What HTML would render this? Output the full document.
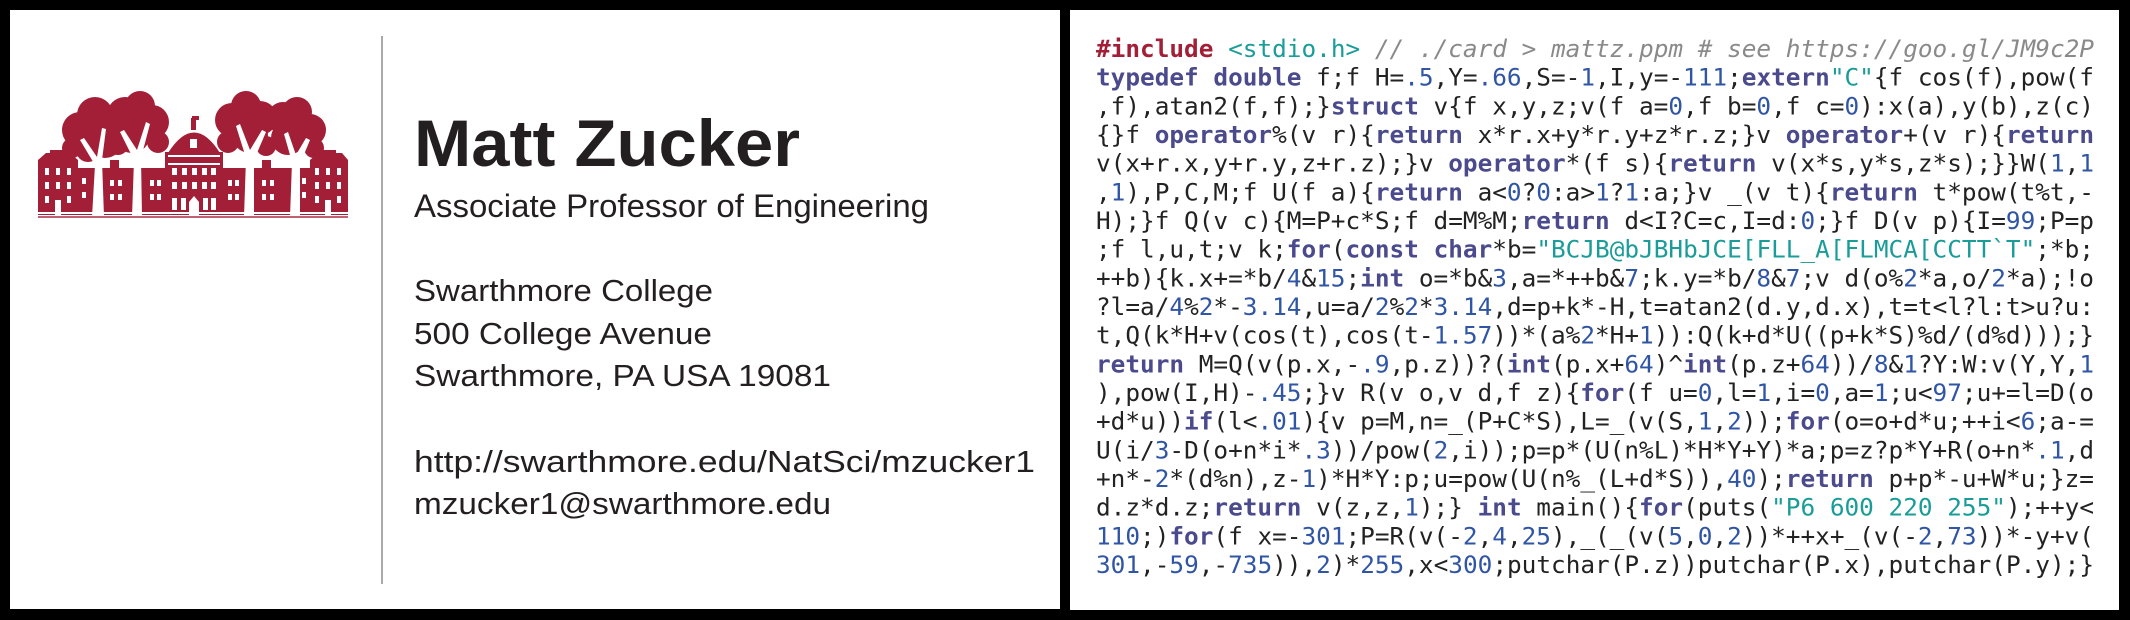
<!DOCTYPE html>
<html><head><meta charset="utf-8"><style>
html,body{margin:0;padding:0;background:#000;}
svg{display:block}
.t{font-family:"Liberation Sans",sans-serif;fill:#231f20}
.code{font-family:"DejaVu Sans Mono","Liberation Mono",monospace;font-size:24.4px;fill:#222;white-space:pre}
.k{fill:#4a4a8c;font-weight:bold}
.n{fill:#2f55a4}
.s{fill:#1a9c99}
.p{fill:#a31f37;font-weight:bold}
.c{fill:#8a8a8a;font-style:italic}
</style></head><body>
<svg width="2130" height="620" viewBox="0 0 2130 620" xmlns="http://www.w3.org/2000/svg">
<rect width="2130" height="620" fill="#000"/>
<rect x="10" y="10" width="1050" height="599" fill="#fff"/>
<rect x="1070" y="10" width="1049" height="600" fill="#fff"/>
<rect x="381" y="36" width="2" height="548" fill="#aaa"/>

<!-- logo -->
<g fill="#a31f37">
  <!-- tree canopies -->
  <circle cx="80" cy="130" r="18"/><circle cx="95" cy="115" r="18"/><circle cx="72" cy="148" r="10"/><circle cx="105" cy="140" r="18"/><circle cx="88" cy="150" r="12"/>
  <circle cx="125" cy="115" r="18"/><circle cx="140" cy="106" r="15"/><circle cx="152" cy="122" r="17"/><circle cx="132" cy="135" r="18"/><circle cx="158" cy="142" r="11"/><circle cx="118" cy="145" r="10"/>
  <circle cx="232" cy="120" r="17"/><circle cx="246" cy="106" r="15"/><circle cx="260" cy="118" r="17"/><circle cx="250" cy="135" r="18"/><circle cx="228" cy="142" r="11"/><circle cx="266" cy="146" r="10"/>
  <circle cx="283" cy="118" r="16"/><circle cx="297" cy="112" r="15"/><circle cx="310" cy="130" r="16"/><circle cx="288" cy="138" r="17"/><circle cx="314" cy="148" r="10"/>
  <!-- buildings -->
  <rect x="38" y="168" width="310" height="47"/>
  <path d="M38 215 V160 L46 153 H70 L78 160 V215 Z"/><rect x="50" y="150" width="16" height="6"/>
  <path d="M310 215 V160 L318 153 H342 L348 160 V215 Z"/><rect x="320" y="150" width="16" height="6"/>
  <rect x="165" y="152" width="58" height="63"/>
  <path d="M168 153 Q194 112 220 153 Z"/>
  <rect x="191" y="118" width="5" height="12"/><rect x="192" y="116" width="7" height="4"/>
  <rect x="110" y="160" width="9" height="10"/><rect x="262" y="160" width="9" height="10"/>
</g>
<g fill="#fff">
  <!-- trunks & branches -->
  <path d="M92 217 L95 165 L80 140 L84 138 L97 157 L102 128 L106 129 L102 160 L104 217 Z"/>
  <path d="M132 217 L134 160 L120 132 L124 130 L137 150 L146 122 L150 124 L141 158 L142 217 Z"/>
  <path d="M244 217 L246 158 L236 126 L240 124 L250 150 L262 130 L266 132 L254 160 L254 217 Z"/>
  <path d="M290 217 L292 162 L284 134 L288 132 L296 155 L306 138 L310 140 L300 164 L300 217 Z"/>
  <!-- windows -->
  <rect x="45" y="168" width="4" height="7"/><rect x="56" y="168" width="4" height="7"/><rect x="67" y="168" width="4" height="7"/>
  <rect x="45" y="182" width="4" height="7"/><rect x="56" y="182" width="4" height="7"/><rect x="67" y="182" width="4" height="7"/>
  <rect x="45" y="196" width="4" height="7"/><rect x="67" y="196" width="4" height="7"/><rect x="55" y="200" width="6" height="15"/>
  <rect x="315" y="168" width="4" height="7"/><rect x="326" y="168" width="4" height="7"/><rect x="337" y="168" width="4" height="7"/>
  <rect x="315" y="182" width="4" height="7"/><rect x="326" y="182" width="4" height="7"/><rect x="337" y="182" width="4" height="7"/>
  <rect x="315" y="196" width="4" height="7"/><rect x="337" y="196" width="4" height="7"/><rect x="325" y="200" width="6" height="15"/>
  <rect x="82" y="178" width="4" height="6"/><rect x="82" y="192" width="4" height="6"/>
  <rect x="110" y="180" width="4" height="6"/><rect x="118" y="180" width="4" height="6"/><rect x="110" y="194" width="4" height="6"/><rect x="118" y="194" width="4" height="6"/>
  <rect x="150" y="180" width="4" height="6"/><rect x="157" y="180" width="4" height="6"/><rect x="150" y="194" width="4" height="6"/><rect x="157" y="194" width="4" height="6"/>
  <rect x="228" y="180" width="4" height="6"/><rect x="235" y="180" width="4" height="6"/><rect x="228" y="194" width="4" height="6"/><rect x="235" y="194" width="4" height="6"/>
  <rect x="262" y="180" width="4" height="6"/><rect x="270" y="180" width="4" height="6"/><rect x="262" y="194" width="4" height="6"/><rect x="270" y="194" width="4" height="6"/>
  <rect x="302" y="178" width="4" height="6"/><rect x="302" y="192" width="4" height="6"/>
  <rect x="168" y="155" width="52" height="2"/><rect x="168" y="163" width="52" height="2"/>
  <rect x="172" y="168" width="5" height="7"/><rect x="182" y="168" width="5" height="7"/><rect x="192" y="168" width="5" height="7"/><rect x="202" y="168" width="5" height="7"/><rect x="211" y="168" width="5" height="7"/>
  <rect x="172" y="182" width="5" height="7"/><rect x="182" y="182" width="5" height="7"/><rect x="192" y="182" width="5" height="7"/><rect x="202" y="182" width="5" height="7"/><rect x="211" y="182" width="5" height="7"/>
  <rect x="172" y="198" width="5" height="12"/><rect x="181" y="198" width="5" height="12"/><path d="M189 215 V202 L194 196 L199 202 V215 Z"/><rect x="203" y="198" width="5" height="12"/><rect x="211" y="198" width="5" height="12"/>
  <rect x="190" y="139" width="7" height="9"/>
  <rect x="36" y="212" width="316" height="2"/>
</g>
<rect x="38" y="216" width="310" height="2" fill="#a31f37" opacity="0.7"/>

<!-- left text -->
<text class="t" x="414" y="166" font-size="66" font-weight="bold" textLength="386" lengthAdjust="spacingAndGlyphs">Matt Zucker</text>
<text class="t" x="414" y="217" font-size="32" textLength="515" lengthAdjust="spacingAndGlyphs">Associate Professor of Engineering</text>
<text class="t" x="414" y="301" font-size="31" textLength="299" lengthAdjust="spacingAndGlyphs">Swarthmore College</text>
<text class="t" x="414" y="344" font-size="31" textLength="298" lengthAdjust="spacingAndGlyphs">500 College Avenue</text>
<text class="t" x="414" y="386" font-size="31" textLength="417" lengthAdjust="spacingAndGlyphs">Swarthmore, PA USA 19081</text>
<text class="t" x="414" y="472" font-size="31" textLength="621" lengthAdjust="spacingAndGlyphs">http://swarthmore.edu/NatSci/mzucker1</text>
<text class="t" x="414" y="514" font-size="31" textLength="417" lengthAdjust="spacingAndGlyphs">mzucker1@swarthmore.edu</text>

<!-- code -->
<g class="code">
<text x="1096" y="57" textLength="998" lengthAdjust="spacingAndGlyphs"><tspan class="p">#include</tspan> <tspan class="s">&lt;stdio.h&gt;</tspan> <tspan class="c">// ./card &gt; mattz.ppm # see https://goo.gl/JM9c2P</tspan></text>
<text x="1096" y="85.7" textLength="998" lengthAdjust="spacingAndGlyphs"><tspan class="k">typedef</tspan> <tspan class="k">double</tspan> f;f H=<tspan class="n">.5</tspan>,Y=<tspan class="n">.66</tspan>,S=-<tspan class="n">1</tspan>,I,y=-<tspan class="n">111</tspan>;<tspan class="k">extern</tspan><tspan class="s">"C"</tspan>{f cos(f),pow(f</text>
<text x="1096" y="114.3" textLength="998" lengthAdjust="spacingAndGlyphs">,f),atan2(f,f);}<tspan class="k">struct</tspan> v{f x,y,z;v(f a=<tspan class="n">0</tspan>,f b=<tspan class="n">0</tspan>,f c=<tspan class="n">0</tspan>):x(a),y(b),z(c)</text>
<text x="1096" y="143" textLength="998" lengthAdjust="spacingAndGlyphs">{}f <tspan class="k">operator</tspan>%(v r){<tspan class="k">return</tspan> x*r.x+y*r.y+z*r.z;}v <tspan class="k">operator</tspan>+(v r){<tspan class="k">return</tspan></text>
<text x="1096" y="171.7" textLength="998" lengthAdjust="spacingAndGlyphs">v(x+r.x,y+r.y,z+r.z);}v <tspan class="k">operator</tspan>*(f s){<tspan class="k">return</tspan> v(x*s,y*s,z*s);}}W(<tspan class="n">1</tspan>,<tspan class="n">1</tspan></text>
<text x="1096" y="200.3" textLength="998" lengthAdjust="spacingAndGlyphs">,<tspan class="n">1</tspan>),P,C,M;f U(f a){<tspan class="k">return</tspan> a&lt;<tspan class="n">0</tspan>?<tspan class="n">0</tspan>:a&gt;<tspan class="n">1</tspan>?<tspan class="n">1</tspan>:a;}v _(v t){<tspan class="k">return</tspan> t*pow(t%t,-</text>
<text x="1096" y="229" textLength="998" lengthAdjust="spacingAndGlyphs">H);}f Q(v c){M=P+c*S;f d=M%M;<tspan class="k">return</tspan> d&lt;I?C=c,I=d:<tspan class="n">0</tspan>;}f D(v p){I=<tspan class="n">99</tspan>;P=p</text>
<text x="1096" y="257.7" textLength="998" lengthAdjust="spacingAndGlyphs">;f l,u,t;v k;<tspan class="k">for</tspan>(<tspan class="k">const</tspan> <tspan class="k">char</tspan>*b=<tspan class="s">"BCJB@bJBHbJCE[FLL_A[FLMCA[CCTT`T"</tspan>;*b;</text>
<text x="1096" y="286.3" textLength="998" lengthAdjust="spacingAndGlyphs">++b){k.x+=*b/<tspan class="n">4</tspan>&amp;<tspan class="n">15</tspan>;<tspan class="k">int</tspan> o=*b&amp;<tspan class="n">3</tspan>,a=*++b&amp;<tspan class="n">7</tspan>;k.y=*b/<tspan class="n">8</tspan>&amp;<tspan class="n">7</tspan>;v d(o%<tspan class="n">2</tspan>*a,o/<tspan class="n">2</tspan>*a);!o</text>
<text x="1096" y="315" textLength="998" lengthAdjust="spacingAndGlyphs">?l=a/<tspan class="n">4</tspan>%<tspan class="n">2</tspan>*-<tspan class="n">3.14</tspan>,u=a/<tspan class="n">2</tspan>%<tspan class="n">2</tspan>*<tspan class="n">3.14</tspan>,d=p+k*-H,t=atan2(d.y,d.x),t=t&lt;l?l:t&gt;u?u:</text>
<text x="1096" y="343.7" textLength="998" lengthAdjust="spacingAndGlyphs">t,Q(k*H+v(cos(t),cos(t-<tspan class="n">1.57</tspan>))*(a%<tspan class="n">2</tspan>*H+<tspan class="n">1</tspan>)):Q(k+d*U((p+k*S)%d/(d%d)));}</text>
<text x="1096" y="372.3" textLength="998" lengthAdjust="spacingAndGlyphs"><tspan class="k">return</tspan> M=Q(v(p.x,-<tspan class="n">.9</tspan>,p.z))?(<tspan class="k">int</tspan>(p.x+<tspan class="n">64</tspan>)^<tspan class="k">int</tspan>(p.z+<tspan class="n">64</tspan>))/<tspan class="n">8</tspan>&amp;<tspan class="n">1</tspan>?Y:W:v(Y,Y,<tspan class="n">1</tspan></text>
<text x="1096" y="401" textLength="998" lengthAdjust="spacingAndGlyphs">),pow(I,H)-<tspan class="n">.45</tspan>;}v R(v o,v d,f z){<tspan class="k">for</tspan>(f u=<tspan class="n">0</tspan>,l=<tspan class="n">1</tspan>,i=<tspan class="n">0</tspan>,a=<tspan class="n">1</tspan>;u&lt;<tspan class="n">97</tspan>;u+=l=D(o</text>
<text x="1096" y="429.7" textLength="998" lengthAdjust="spacingAndGlyphs">+d*u))<tspan class="k">if</tspan>(l&lt;<tspan class="n">.01</tspan>){v p=M,n=_(P+C*S),L=_(v(S,<tspan class="n">1</tspan>,<tspan class="n">2</tspan>));<tspan class="k">for</tspan>(o=o+d*u;++i&lt;<tspan class="n">6</tspan>;a-=</text>
<text x="1096" y="458.3" textLength="998" lengthAdjust="spacingAndGlyphs">U(i/<tspan class="n">3</tspan>-D(o+n*i*<tspan class="n">.3</tspan>))/pow(<tspan class="n">2</tspan>,i));p=p*(U(n%L)*H*Y+Y)*a;p=z?p*Y+R(o+n*<tspan class="n">.1</tspan>,d</text>
<text x="1096" y="487" textLength="998" lengthAdjust="spacingAndGlyphs">+n*-<tspan class="n">2</tspan>*(d%n),z-<tspan class="n">1</tspan>)*H*Y:p;u=pow(U(n%_(L+d*S)),<tspan class="n">40</tspan>);<tspan class="k">return</tspan> p+p*-u+W*u;}z=</text>
<text x="1096" y="515.7" textLength="998" lengthAdjust="spacingAndGlyphs">d.z*d.z;<tspan class="k">return</tspan> v(z,z,<tspan class="n">1</tspan>);} <tspan class="k">int</tspan> main(){<tspan class="k">for</tspan>(puts(<tspan class="s">"P6 600 220 255"</tspan>);++y&lt;</text>
<text x="1096" y="544.3" textLength="998" lengthAdjust="spacingAndGlyphs"><tspan class="n">110</tspan>;)<tspan class="k">for</tspan>(f x=-<tspan class="n">301</tspan>;P=R(v(-<tspan class="n">2</tspan>,<tspan class="n">4</tspan>,<tspan class="n">25</tspan>),_(_(v(<tspan class="n">5</tspan>,<tspan class="n">0</tspan>,<tspan class="n">2</tspan>))*++x+_(v(-<tspan class="n">2</tspan>,<tspan class="n">73</tspan>))*-y+v(</text>
<text x="1096" y="573" textLength="998" lengthAdjust="spacingAndGlyphs"><tspan class="n">301</tspan>,-<tspan class="n">59</tspan>,-<tspan class="n">735</tspan>)),<tspan class="n">2</tspan>)*<tspan class="n">255</tspan>,x&lt;<tspan class="n">300</tspan>;putchar(P.z))putchar(P.x),putchar(P.y);}</text>
</g>
</svg>
</body></html>
